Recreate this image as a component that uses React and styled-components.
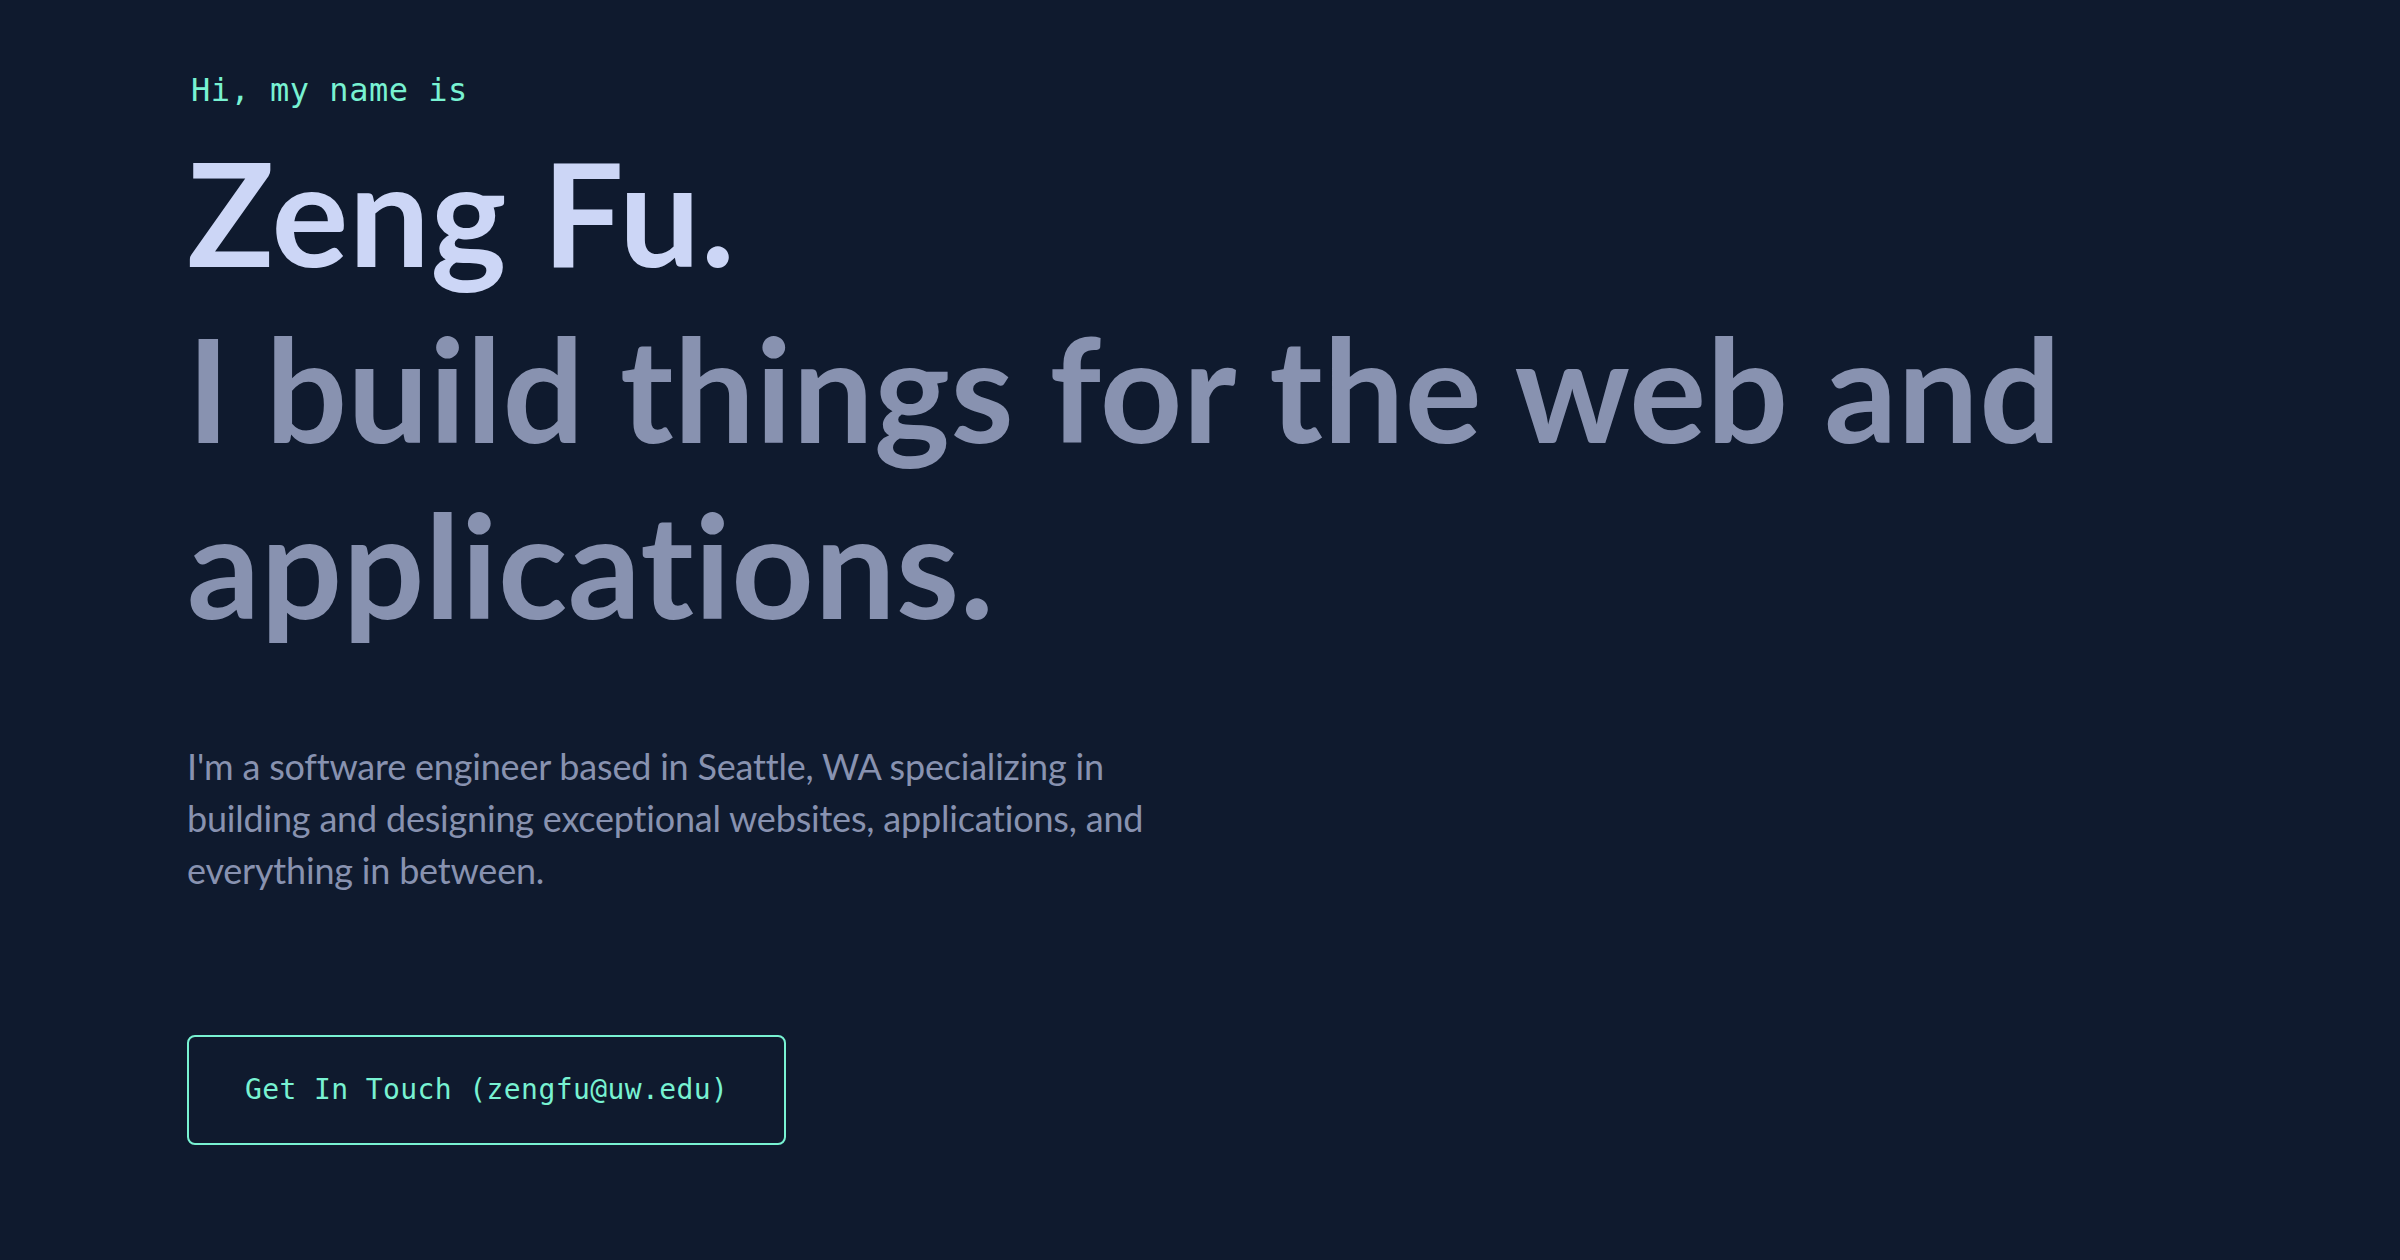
import React from 'react'
import styled, { createGlobalStyle } from 'styled-components'

const GlobalStyle = createGlobalStyle`
  html, body {
    margin: 0;
    padding: 0;
    background-color: #0f1a2e;
  }
  * {
    box-sizing: border-box;
  }
`

const Hero = styled.section`
  min-height: 100vh;
  padding: 74px 187px 0;
  display: flex;
  flex-direction: column;
  align-items: flex-start;
  background-color: #0f1a2e;
`

const Greeting = styled.h1`
  margin: 0 0 18px 4px;
  font-family: 'DejaVu Sans Mono', 'Liberation Mono', monospace;
  font-size: 32px;
  font-weight: 400;
  line-height: 32px;
  letter-spacing: 0.5px;
  color: #78f2d2;
`

const BigHeading = styled.h2`
  margin: 0;
  font-family: Lato, 'Noto Sans', sans-serif;
  font-size: 144px;
  font-weight: 700;
  line-height: 176px;
  letter-spacing: 0.4px;
  color: ${(props) => (props.$muted ? '#8892b0' : '#ccd6f6')};
`

const Intro = styled.p`
  margin: 88px 0 0;
  font-family: Lato, 'Noto Sans', sans-serif;
  font-size: 36px;
  font-weight: 400;
  line-height: 52px;
  letter-spacing: -0.2px;
  color: #8892b0;
`

const ContactButton = styled.a`
  margin-top: 139px;
  padding: 40px 56px;
  border: 2px solid #78f2d2;
  border-radius: 8px;
  font-family: 'DejaVu Sans Mono', 'Liberation Mono', monospace;
  font-size: 28px;
  line-height: 26px;
  letter-spacing: 0.4px;
  color: #78f2d2;
  text-decoration: none;
  cursor: pointer;

  &:hover {
    background-color: rgba(100, 255, 218, 0.1);
  }
`

const App = () => {
  return (
    <Hero id='home'>
      <GlobalStyle />
      <Greeting>Hi, my name is</Greeting>
      <BigHeading>Zeng Fu.</BigHeading>
      <BigHeading $muted>
        I build things for the web and
        <br />
        applications.
      </BigHeading>
      <Intro>
        I'm a software engineer based in Seattle, WA specializing in
        <br />
        building and designing exceptional websites, applications, and
        <br />
        everything in between.
      </Intro>
      <ContactButton href='mailto:zengfu@uw.edu'>Get In Touch (zengfu@uw.edu)</ContactButton>
    </Hero>
  )
}

export default App
